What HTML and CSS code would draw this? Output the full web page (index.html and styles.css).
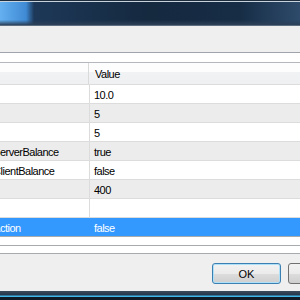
FILE: index.html
```html
<!DOCTYPE html>
<html lang="en">
<head>
  <meta charset="UTF-8">
  <title>Expert Properties</title>
  <link rel="stylesheet" href="styles.css">
</head>
<body>
  <div class="window">
    <div class="titlebar"></div>
    <div class="band"></div>
    <div class="strip"></div>

    <div class="grid">
      <div class="head">
        <div class="name"></div>
        <div class="value">Value</div>
      </div>
      <div class="row"><div class="name"></div><div class="value">10.0</div></div>
      <div class="row alt"><div class="name"></div><div class="value">5</div></div>
      <div class="row"><div class="name"></div><div class="value">5</div></div>
      <div class="row alt"><div class="name">UseServerBalance</div><div class="value">true</div></div>
      <div class="row"><div class="name">UseClientBalance</div><div class="value">false</div></div>
      <div class="row alt"><div class="name"></div><div class="value">400</div></div>
      <div class="row"><div class="name"></div><div class="value"></div></div>
      <div class="row selected"><div class="name">UseAction</div><div class="value">false</div></div>
    </div>

    <div class="grid-end"></div>
    <div class="strip bottom"></div>

    <div class="footer">
      <button class="btn default">OK</button>
      <button class="btn">Cancel</button>
    </div>
    <div class="frame-bottom"></div>
  </div>
</body>
</html>
```

FILE: styles.css
```css
body {
  margin: 0;
  font-family: "Liberation Sans", Arial, sans-serif;
  font-size: 11px;
  letter-spacing: -0.5px;
  color: #000;
  background: #14222f;
  overflow: hidden;
}
.window {
  width: 300px;
  height: 300px;
  overflow: hidden;
}
.titlebar {
  height: 25px;
  border-bottom: 1px solid #5d6e80;
  background:
    linear-gradient(to bottom, #1e2d3e 0, #1e2d3e 1px, #c8d2dc 1px, #c8d2dc 2px, transparent 2px),
    linear-gradient(to bottom, transparent 0, transparent 20px, #2c4058 25px),
    linear-gradient(to right, #64b0f0 0, #3f8ad4 26px, #1d3858 34px, #15293f 50%, #172d46 80%, #2e4b6b 100%);
}
.band {
  height: 26px;
  background: #efefef;
  border-bottom: 1px solid #9ea4aa;
}
.strip {
  height: 9px;
  background: #fff;
  border-bottom: 1px solid #b4b8bc;
}
.grid {
  margin-left: -29px;
  width: 340px;
  background: #fff;
}
.head {
  display: flex;
  height: 21px;
  line-height: 22px;
  background: linear-gradient(to bottom, #fdfdfd 0, #fdfdfd 9px, #f1f2f4 9px, #eff0f2 100%);
}
.head .name {
  width: 113px;
  padding-left: 4px;
  border-right: 1px solid #dadada;
}
.head .value {
  padding-left: 6px;
}
.row {
  display: flex;
  height: 18px;
  line-height: 20px;
  border-top: 1px solid #dcdcdc;
}
.row .name {
  width: 114px;
  padding-left: 4px;
  border-right: 1px solid #dcdcdc;
  white-space: nowrap;
  overflow: hidden;
}
.row .value {
  padding-left: 4px;
}
.alt {
  background: #ececec;
}
.selected {
  background: #3399ff;
  color: #fff;
}
.selected .name {
  border-right-color: #3399ff;
}
.grid-end {
  height: 8px;
  background: #fff;
  border-top: 1px solid #a6abb0;
}
.strip.bottom {
  height: 7px;
  border-top: 1px solid #a6abb0;
  border-bottom: 1px solid #a6abb0;
}
.footer {
  height: 37px;
  background: #efefef;
  display: flex;
  gap: 7px;
  padding: 9px 0 0 212px;
  box-sizing: border-box;
}
.btn {
  flex: none;
  width: 69px;
  height: 21px;
  padding: 0;
  font-family: "Liberation Sans", Arial, sans-serif;
  font-size: 11px;
  color: #000;
  border: 1px solid #707070;
  border-radius: 3px;
  background: linear-gradient(to bottom, #f2f2f2 0, #ebebeb 50%, #dddddd 50%, #cfcfcf 100%);
}
.btn.default {
  border-color: #3c7fb1;
  box-shadow: inset 0 0 0 1px #aee0f8;
}
.frame-bottom {
  height: 9px;
  background: linear-gradient(to bottom, #3b4b5c 0, #26364a 4px, #3fb7e8 5px, #3fb7e8 6px, #0f1a26 6px);
}
```
